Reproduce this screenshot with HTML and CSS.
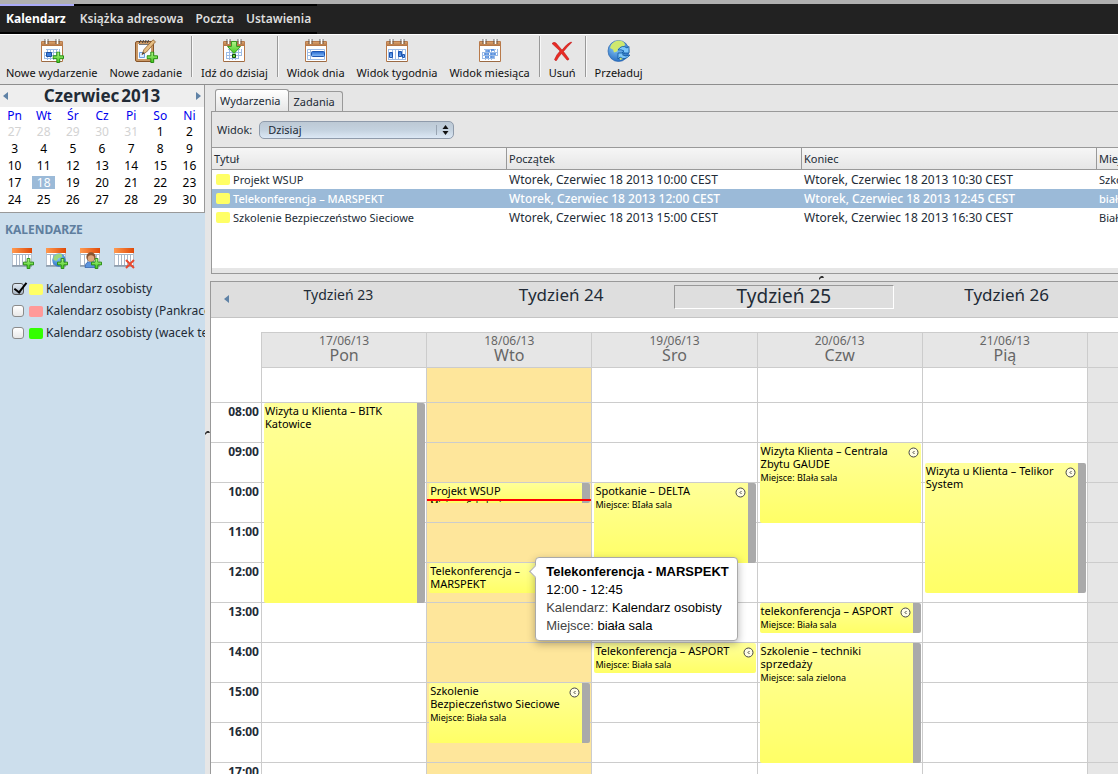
FILE: index.html
```html
<!DOCTYPE html>
<html lang="pl">
<head>
<meta charset="utf-8">
<title>Kalendarz</title>
<link rel="stylesheet" href="styles.css">
</head>
<body>
<svg class="defs" aria-hidden="true">
  <defs>
    <linearGradient id="gGreen" x1="0" y1="0" x2="0" y2="1"><stop offset="0" stop-color="#b6f58c"/><stop offset="1" stop-color="#3fc81c"/></linearGradient>
    <linearGradient id="gBlue" x1="0" y1="0" x2="0" y2="1"><stop offset="0" stop-color="#2467cf"/><stop offset="1" stop-color="#8cc0fa"/></linearGradient>
    <linearGradient id="gTan" x1="0" y1="0" x2="0" y2="1"><stop offset="0" stop-color="#d9a26c"/><stop offset="1" stop-color="#b0703f"/></linearGradient>
    <linearGradient id="gOrange" x1="0" y1="0" x2="1" y2="0"><stop offset="0" stop-color="#ff9a50"/><stop offset="1" stop-color="#e04a08"/></linearGradient>
    <radialGradient id="gGlobe" cx=".4" cy=".3" r=".8"><stop offset="0" stop-color="#8fd0fb"/><stop offset="1" stop-color="#1c62bb"/></radialGradient>
    <symbol id="sheet" viewBox="0 0 24 24">
      <path d="M1.500 2.500h21v20h-21z" fill="#fff" stroke="#b87a4b"/>
      <path d="M2 3h20v4H2z" fill="url(#gTan)"/>
      <path d="M5.500 0v5M8.500 0v5M16.500 0v5M19.500 0v5" transform="translate(-.5)" stroke="#444" stroke-width=".8"/>
      <path d="M6.500 0v5M17.500 0v5" stroke="#fff" stroke-width="1.500"/>
      <path d="M2 22.500h20" stroke="#9b6a44"/>
    </symbol>
    <symbol id="grid" viewBox="0 0 24 24"><path d="M6 10.500h12M4 13.500h16M4 16.500h16M4 19.500h12M7.500 10v11M10.500 10v11M13.500 10v11M16.500 10v10M4.500 13v7M19.500 10v7" stroke="#9dbce6" fill="none"/></symbol>
    <symbol id="plus" viewBox="0 0 12 12"><path d="M4.500.5h3v4h4v3h-4v4h-3v-4h-4v-3h4z" fill="url(#gGreen)" stroke="#23890d"/></symbol>
    <symbol id="miniCal" viewBox="0 0 22 21">
      <path d="M.5.5h19v17H.5z" fill="#fff" stroke="#b9c3cf"/>
      <path d="M0 0h20v5H0z" fill="url(#gOrange)"/>
      <path d="M1 6.500h18M4.500 6v11M7.500 6v11M10.500 6v11M13.500 6v11M16.500 6v11" stroke="#a9b7c8"/>
      <path d="M0 18h20" stroke="#69788a"/>
    </symbol>
    <symbol id="clock" viewBox="0 0 11 11"><circle cx="5.500" cy="5.500" r="4.500" fill="#fffde8" stroke="#444"/><path d="M6.500 4L5 5.500 6.500 7" fill="none" stroke="#333" stroke-width=".9"/></symbol>
  </defs>
</svg>

<header class="masthead">
  <nav class="menu">
    <a class="menu-item is-active" href="#">Kalendarz</a>
    <a class="menu-item" href="#">Książka adresowa</a>
    <a class="menu-item" href="#">Poczta</a>
    <a class="menu-item" href="#">Ustawienia</a>
  </nav>
</header>

<div class="toolbar">
  <div class="tool-group">
    <button class="tool"><svg class="tool-icon" viewBox="0 0 24 24"><use href="#sheet"/><use href="#grid"/><path d="M6.500 13.500h5v4h-5z" fill="#3b7ddd" stroke="#1d4f9f"/><use href="#plus" x="12.500" y="12.500" width="11.500" height="11.500"/></svg>Nowe wydarzenie</button>
    <button class="tool"><svg class="tool-icon" viewBox="0 0 24 24"><rect x="1.500" y="2.500" width="18" height="20" rx="1.500" fill="#c99865" stroke="#875327"/><path d="M4 5h13v15H4z" fill="#f8fbff"/><path d="M5 5.500h11" stroke="#777"/><path d="M6 2.500l1-1.500M8.500 4l1-3M11 4l1-3M13.500 4l1-3M5.500 4v-2" stroke="#444" fill="none"/><path d="M5.500 13.500h5v5h-5z" fill="#dcebff" stroke="#6b9ee0"/><path d="M8 15.500l2-5L19 .8l2.500 2L12.500 13z" fill="#e6bd82" stroke="#8d5e2d" stroke-width=".8"/><path d="M8 15.500l1-2.500 1.500 1.300z" fill="#333"/><use href="#plus" x="12.500" y="12.500" width="11.500" height="11.500"/></svg>Nowe zadanie</button>
  </div>
  <div class="tool-group">
    <button class="tool"><svg class="tool-icon" viewBox="0 0 24 24"><use href="#sheet"/><use href="#grid"/><path d="M10.500 15.500h3v3h-3z" fill="#69d83f" stroke="#174f0c"/><path d="M9.500 2.500h5v5h4l-6.500 7-6.500-7h4z" fill="url(#gGreen)" stroke="#3b9a22"/></svg>Idź do dzisiaj</button>
  </div>
  <div class="tool-group">
    <button class="tool"><svg class="tool-icon" viewBox="0 0 24 24"><use href="#sheet"/><path d="M3.500 10.500h17v10h-17zM6.500 10v11M4 13.500h3M4 16.500h3" fill="none" stroke="#9dbce6"/><rect x="7.500" y="12.500" width="13" height="5" rx="1" fill="url(#gBlue)" stroke="#1e55b0"/></svg>Widok dnia</button>
    <button class="tool"><svg class="tool-icon" viewBox="0 0 24 24"><use href="#sheet"/><path d="M3 10.500h18M3 20.500h18M3.500 10v11M7.500 10v11M10.500 10v11M13.500 10v11M17.500 10v11M20.500 10v11" stroke="#9dbce6"/><path d="M4.500 13.500h3v5h-3zM13.500 12.500h3v5h-3zM17.500 15.500h2v3h-2z" fill="url(#gBlue)" stroke="#1e55b0"/></svg>Widok tygodnia</button>
    <button class="tool"><svg class="tool-icon" viewBox="0 0 24 24"><use href="#sheet"/><use href="#grid"/><path d="M8 12h4M13 11h3M6 15h5M12 15h6M7 18h4M12 18h4" stroke="#4684dc" stroke-width="1.500"/></svg>Widok miesiąca</button>
  </div>
  <div class="tool-group">
    <button class="tool"><svg class="tool-icon" viewBox="0 0 24 24"><path d="M2 4.500Q4 2.500 6 4l6 7Q17 4.500 21 3q1.500 0 0 1.200-4 3.800-7.500 8.300l5.500 7.500q-.5 1.500-2 1l-5.500-6.500q-3.500 4-5 7-1.500.5-2-1 2-5 5.500-8.500z" fill="#e82c24" stroke="#b80f12" stroke-width=".5"/></svg>Usuń</button>
  </div>
  <div class="tool-group">
    <button class="tool"><svg class="tool-icon" viewBox="0 0 24 24"><circle cx="11.500" cy="12" r="10.500" fill="url(#gGlobe)" stroke="#2a64ad" stroke-width=".7"/><path d="M3 9q1-6 8-7.500 6 0 7 4l-2 4-4-1-2 4-3 1-1-3zM12 15l5 1-1 4-3 1z" fill="#cfe86e"/><path d="M11 11q4-6 9-2l2-1.500v6.500h-7l2-2q-3-2-6-1zM23 16q-5 6-10 2l-2 2v-6h6.500l-2 2q3 2 7.500 0z" fill="#7cc6fa" stroke="#0e579f" stroke-width=".8"/></svg>Przeładuj</button>
  </div>
</div>

<div class="workspace">
  <aside class="sidebar">
    <section class="minical">
      <div class="minical-head">
        <button class="arrow" aria-label="Poprzedni miesiąc"><svg class="tri" viewBox="0 0 5 8"><path d="M5 0v8L0 4z"/></svg></button>
        <h2 class="minical-title"><span>Czerwiec</span><span>2013</span></h2>
        <button class="arrow" aria-label="Następny miesiąc"><svg class="tri" viewBox="0 0 5 8"><path d="M0 0v8l5-4z"/></svg></button>
      </div>
      <table class="days">
        <thead><tr><th>Pn</th><th>Wt</th><th>Śr</th><th>Cz</th><th>Pi</th><th>So</th><th>Ni</th></tr></thead>
        <tbody>
          <tr><td class="off">27</td><td class="off">28</td><td class="off">29</td><td class="off">30</td><td class="off">31</td><td>1</td><td>2</td></tr>
          <tr><td>3</td><td>4</td><td>5</td><td>6</td><td>7</td><td>8</td><td>9</td></tr>
          <tr><td>10</td><td>11</td><td>12</td><td>13</td><td>14</td><td>15</td><td>16</td></tr>
          <tr><td>17</td><td><span class="today">18</span></td><td>19</td><td>20</td><td>21</td><td>22</td><td>23</td></tr>
          <tr><td>24</td><td>25</td><td>26</td><td>27</td><td>28</td><td>29</td><td>30</td></tr>
        </tbody>
      </table>
    </section>
    <h3 class="side-title">KALENDARZE</h3>
    <div class="side-tools">
      <button class="side-tool" aria-label="Nowy kalendarz"><svg viewBox="0 0 22 21"><use href="#miniCal"/><use href="#plus" x="11" y="10" width="11" height="11"/></svg></button>
      <button class="side-tool" aria-label="Kalendarz sieciowy"><svg viewBox="0 0 22 21"><use href="#miniCal"/><circle cx="13" cy="12" r="6.800" fill="url(#gGlobe)"/><path d="M7.500 9q3-4 8-3l1 3-4 1-2 3-3-1zM12 14l4-1-1 5-2-1z" fill="#9bd87c"/><use href="#plus" x="11" y="10" width="11" height="11"/></svg></button>
      <button class="side-tool" aria-label="Kalendarz użytkownika"><svg viewBox="0 0 22 21"><use href="#miniCal"/><path d="M5 19.500q0-6 6-6t6 6z" fill="#5b93dc" stroke="#2b5ca8" stroke-width=".7"/><circle cx="11" cy="9" r="4.700" fill="#8a5430"/><circle cx="11" cy="10.500" r="3.200" fill="#dea77c"/><use href="#plus" x="11" y="10" width="11" height="11"/></svg></button>
      <button class="side-tool" aria-label="Usuń kalendarz"><svg viewBox="0 0 22 21"><use href="#miniCal"/><path d="M12 12l8 8M20 12l-8 8" stroke="#e8492e" stroke-width="2"/></svg></button>
    </div>
    <ul class="cal-list">
      <li><label class="cal"><input class="check" type="checkbox" checked><span class="swatch yellow"></span>Kalendarz osobisty</label></li>
      <li><label class="cal"><input class="check" type="checkbox"><span class="swatch pink"></span>Kalendarz osobisty (Pankracek)</label></li>
      <li><label class="cal"><input class="check" type="checkbox"><span class="swatch green"></span>Kalendarz osobisty (wacek test)</label></li>
    </ul>
  </aside>
  <div class="splitter-v"><svg class="grip" viewBox="0 0 5 4"><path d="M0 4V2l2-2h2l1 2H2z"/></svg></div>

  <main class="content">
    <div class="tabs">
      <button class="tab is-current">Wydarzenia</button>
      <button class="tab">Zadania</button>
    </div>
    <section class="list">
      <div class="filter">
        <label for="view">Widok:</label>
        <span class="pick">
          <select id="view" class="pick-select"><option>Dzisiaj</option></select>
          <svg class="pick-arrows" viewBox="0 0 6 10"><path d="M3 0l3 4H0zM3 10l3-4H0z"/></svg>
        </span>
      </div>
      <div class="table-wrap">
      <table class="events">
        <colgroup><col class="c-main"><col class="c-main"><col class="c-main"><col></colgroup>
        <thead><tr><th>Tytuł</th><th>Początek</th><th>Koniec</th><th>Miejsce</th></tr></thead>
        <tbody>
          <tr><td><span class="title"><span class="swatch yellow"></span>Projekt WSUP</span></td><td class="when">Wtorek, Czerwiec 18 2013 10:00 CEST</td><td class="when">Wtorek, Czerwiec 18 2013 10:30 CEST</td><td>Szkoleniowa</td></tr>
          <tr class="is-selected"><td><span class="title"><span class="swatch yellow"></span>Telekonferencja – MARSPEKT</span></td><td class="when">Wtorek, Czerwiec 18 2013 12:00 CEST</td><td class="when">Wtorek, Czerwiec 18 2013 12:45 CEST</td><td>biała sala</td></tr>
          <tr><td><span class="title"><span class="swatch yellow"></span>Szkolenie Bezpieczeństwo Sieciowe</span></td><td class="when">Wtorek, Czerwiec 18 2013 15:00 CEST</td><td class="when">Wtorek, Czerwiec 18 2013 16:30 CEST</td><td>Biała sala</td></tr>
        </tbody>
      </table>
      </div>
    </section>
    <div class="splitter-h"><svg class="grip" viewBox="0 0 5 4"><path d="M0 4V2l2-2h2l1 2H2z"/></svg></div>

    <section class="week">
      <nav class="weeks">
        <button class="arrow" aria-label="Poprzedni tydzień"><svg class="tri" viewBox="0 0 5 8"><path d="M5 0v8L0 4z"/></svg></button>
        <a class="wk small" href="#">Tydzień 23</a>
        <a class="wk" href="#">Tydzień 24</a>
        <a class="wk is-current" href="#">Tydzień 25</a>
        <a class="wk" href="#">Tydzień 26</a>
      </nav>
      <div class="planner">
        <div class="hours">
          <div class="hour first"></div><div class="hour">08:00</div><div class="hour">09:00</div><div class="hour">10:00</div><div class="hour">11:00</div><div class="hour">12:00</div><div class="hour">13:00</div><div class="hour">14:00</div><div class="hour">15:00</div><div class="hour">16:00</div><div class="hour">17:00</div>
        </div>
        <div class="day">
          <div class="day-head"><span class="date">17/06/13</span><span class="name">Pon</span></div>
          <div class="slots">
            <article class="ev busy" style="grid-row: 2 / span 20"><div class="ev-text"><h4>Wizyta u Klienta – BITK Katowice</h4></div></article>
          </div>
        </div>
        <div class="day is-today">
          <div class="day-head"><span class="date">18/06/13</span><span class="name">Wto</span></div>
          <div class="slots">
            <article class="ev busy" style="grid-row: 10 / span 2"><div class="ev-text"><h4>Projekt WSUP</h4><p>Miejsce: Szkoleniowa</p></div></article>
            <article class="ev" style="grid-row: 18 / span 3"><div class="ev-text"><h4>Telekonferencja – MARSPEKT</h4></div><svg class="clock"><use href="#clock"/></svg></article>
            <article class="ev busy" style="grid-row: 30 / span 6"><div class="ev-text"><h4>Szkolenie<br>Bezpieczeństwo Sieciowe</h4><p>Miejsce: Biała sala</p></div><svg class="clock"><use href="#clock"/></svg></article>
            <div class="now"></div>
            <div class="tip" role="tooltip">
              <strong>Telekonferencja - MARSPEKT</strong>
              <span>12:00 - 12:45</span>
              <span><em>Kalendarz:</em> Kalendarz osobisty</span>
              <span><em>Miejsce:</em> biała sala</span>
            </div>
          </div>
        </div>
        <div class="day">
          <div class="day-head"><span class="date">19/06/13</span><span class="name">Śro</span></div>
          <div class="slots">
            <article class="ev busy" style="grid-row: 10 / span 8"><div class="ev-text"><h4>Spotkanie – DELTA</h4><p>Miejsce: BIała sala</p></div><svg class="clock"><use href="#clock"/></svg></article>
            <article class="ev" style="grid-row: 26 / span 3"><div class="ev-text"><h4>Telekonferencja – ASPORT</h4><p>Miejsce: Biała sala</p></div><svg class="clock"><use href="#clock"/></svg></article>
          </div>
        </div>
        <div class="day">
          <div class="day-head"><span class="date">20/06/13</span><span class="name">Czw</span></div>
          <div class="slots">
            <article class="ev" style="grid-row: 6 / span 8"><div class="ev-text"><h4>Wizyta Klienta – Centrala Zbytu GAUDE</h4><p>Miejsce: BIała sala</p></div><svg class="clock"><use href="#clock"/></svg></article>
            <article class="ev busy" style="grid-row: 22 / span 3"><div class="ev-text"><h4>telekonferencja – ASPORT</h4><p>Miejsce: Biała sala</p></div><svg class="clock"><use href="#clock"/></svg></article>
            <article class="ev busy" style="grid-row: 26 / span 12"><div class="ev-text"><h4>Szkolenie – techniki<br>sprzedaży</h4><p>Miejsce: sala zielona</p></div></article>
          </div>
        </div>
        <div class="day">
          <div class="day-head"><span class="date">21/06/13</span><span class="name">Pią</span></div>
          <div class="slots">
            <article class="ev busy" style="grid-row: 8 / span 13"><div class="ev-text"><h4>Wizyta u Klienta – Telikor System</h4></div><svg class="clock"><use href="#clock"/></svg></article>
          </div>
        </div>
        <div class="day is-weekend">
          <div class="day-head"></div>
          <div class="slots"></div>
        </div>
      </div>
    </section>
  </main>
</div>
</body>
</html>
```
FILE: styles.css
```css
* { box-sizing: border-box; }

body {
  margin: 0;
  height: 100vh;
  display: flex;
  flex-direction: column;
  overflow: hidden;
  background: #e6e6e6;
  color: #222b36;
  font: 11px/16px "Noto Sans", "Open Sans", sans-serif;
}

button {
  border: 0;
  padding: 0;
  background: none;
  color: inherit;
  font: inherit;
}

a { color: inherit; text-decoration: none; }
.defs { position: absolute; width: 0; height: 0; }

/* Menu bar */
.masthead {
  flex: none;
  display: flex;
  background: #222;
  border-top: 4px solid #b0b0b0;
}

.menu { display: flex; border-bottom: 2px solid #000; }

.menu-item {
  padding: 4px 6px 5px;
  border-top: 2px solid #000;
  color: #ddd;
  font-size: 12px;
  font-weight: 600;
  line-height: 17px;
}

.menu-item.is-active { padding-right: 8px; color: #fff; font-weight: 700; border-top-color: #aaaaf8; }

/* Toolbar */
.toolbar {
  flex: none;
  display: flex;
  height: 51px;
  padding: 1px 0 7px;
  border-top: 1px solid #fff;
  border-bottom: 1px solid #8e8e8e;
}

.tool-group { display: flex; padding: 0 3px; border-right: 1px solid #999; box-shadow: 1px 0 #f8f8f8; }
.tool-group:first-child { padding-left: 0; }
.tool-group:last-child { border: 0; box-shadow: none; }

.tool {
  display: flex;
  flex-direction: column;
  align-items: center;
  padding: 3px 6px 0;
  gap: 2px;
  color: #111;
  white-space: nowrap;
}

.tool-icon { width: 24px; height: 24px; flex: none; }

/* Frame */
.workspace {
  flex: 1;
  min-height: 0;
  display: grid;
  grid-template-columns: 205px 5px minmax(0, 1fr);
}

.sidebar { overflow: hidden; background: #ccdeec; }

.splitter-v { display: flex; align-items: center; padding-top: 6px; }
.grip { width: 5px; height: 4px; fill: #333; }

.arrow { width: 11px; display: flex; justify-content: center; align-items: center; }
.tri { width: 5px; height: 8px; fill: #5f82a6; }

/* Month view */
.minical {
  border-right: 1px solid #999;
  border-bottom: 1px solid #999;
  background: #fff;
}

.minical-head {
  display: flex;
  justify-content: space-between;
  height: 22px;
  background: #eee;
}

.minical-title {
  display: flex;
  gap: 2px;
  margin: 0;
  font-size: 17px;
  line-height: 22px;
}

.days {
  width: 100%;
  table-layout: fixed;
  border-collapse: collapse;
  margin-bottom: 4px;
  color: #000;
  font-size: 12px;
}

.days th, .days td { height: 17px; padding: 0; text-align: center; line-height: 16px; font-weight: 400; }
.days th { height: 16px; line-height: 15px; color: #00e; }
.days .off { color: #d3d3d3; }
.today { display: block; width: 23px; margin: 0 auto; line-height: 13px; background: #9bbad8; color: #fff; }

/* Calendar list */
.side-title { margin: 9px 5px 10px; color: #5f7f9f; font-size: 12px; line-height: 16px; }
.side-tools { display: flex; gap: 12px; padding-left: 12px; }
.side-tool { width: 22px; height: 21px; }
.side-tool svg { display: block; width: 22px; height: 21px; }

.cal-list { margin: 9px 0 0; padding: 0; list-style: none; font-size: 12px; }
.cal { display: flex; align-items: center; height: 22px; padding-left: 12px; white-space: nowrap; }

.check {
  appearance: none;
  flex: none;
  width: 12px;
  height: 12px;
  margin: 0 5px 0 0;
  border: 1px solid #8b8b8b;
  border-radius: 3px;
  background: linear-gradient(#fff, #e8e8e8);
}

.check:checked { background: linear-gradient(#e0eaf4, #a9b6c3); border-color: #555; }

.check:checked::after {
  content: "";
  display: block;
  width: 5px;
  height: 11px;
  margin: -4px 0 0 4px;
  border: solid #000;
  border-width: 0 2px 2px 0;
  transform: rotate(38deg);
}

.swatch { flex: none; width: 14px; height: 11px; margin-right: 3px; border-radius: 2px; }
.yellow { background: #ff6; }
.pink { background: #f99; }
.green { background: #3f0; }

/* Event list */
.content { display: flex; flex-direction: column; min-width: 0; min-height: 0; }

.tabs { flex: none; display: flex; align-items: flex-end; height: 26px; padding-left: 5px; }

.tab {
  height: 20px;
  padding: 0 7px 0 5px;
  border: 1px solid #999;
  border-left-width: 0;
  border-bottom: 0;
  border-radius: 0 3px 0 0;
  background: #e2e2e2;
}

.tab.is-current {
  height: 22px;
  padding-left: 4px;
  border-left-width: 1px;
  border-radius: 3px 3px 0 0;
  background: linear-gradient(#fff, #e6e6e6);
}

.list {
  flex: none;
  height: 163px;
  margin-left: 1px;
  padding-bottom: 5px;
  display: flex;
  flex-direction: column;
  border: 1px solid #999;
  border-right: 0;
}

.filter { flex: none; display: flex; align-items: center; gap: 7px; height: 35px; padding-left: 5px; }
.pick { display: flex; align-items: center; position: relative; }

.pick-select {
  appearance: none;
  width: 195px;
  height: 18px;
  padding: 0 8px;
  border: 1px solid #8f9bab;
  border-radius: 5px;
  background: linear-gradient(#bdc9d5, #c4d2df 50%, #dce8f5);
  color: inherit;
  font: inherit;
  line-height: 16px;
}

.pick-arrows {
  position: absolute;
  right: 0;
  width: 18px;
  height: 10px;
  fill: #111;
  border-left: 1px solid #98a4b2;
  pointer-events: none;
}

.table-wrap { flex: 1; overflow: hidden; background: #fff; }
.events { width: 100%; table-layout: fixed; border-collapse: separate; border-spacing: 0; }
.c-main { width: 295px; }

.events th, .events td {
  padding: 0 2px;
  overflow: hidden;
  text-align: left;
  white-space: nowrap;
  line-height: 17px;
}

.events th {
  height: 23px;
  border: solid #999;
  border-width: 1px 1px 1px 0;
  background: linear-gradient(#f6f6f6, #e6e6e6);
  font-weight: 400;
}

.events th:last-child { border-right: 0; }
.events td { height: 19px; }
.events .when { font-size: 12px; }
.title { display: flex; align-items: center; padding-left: 2px; }
.is-selected { background: #9bbad8; color: #fff; font-weight: 500; }

.splitter-h { flex: none; display: flex; justify-content: center; align-items: center; height: 7px; padding-left: 314px; }

/* Week view */
.week {
  flex: 1;
  min-height: 0;
  display: flex;
  flex-direction: column;
  overflow: hidden;
  border: 1px solid #999;
  border-width: 1px 0 0 1px;
  background: #fff;
}

.weeks {
  flex: none;
  display: grid;
  grid-template-columns: 16px repeat(4, minmax(0, 1fr));
  height: 36px;
  padding-top: 3px;
  border-bottom: 1px solid #c4c4c4;
  background: #dedede;
}

.weeks .arrow { width: 30px; height: 28px; }

.wk {
  height: 24px;
  margin: 0 1px;
  border: 1px solid transparent;
  text-align: center;
  font-size: 17px;
  line-height: 18px;
}

.wk.small { font-size: 14px; line-height: 17px; }
.wk.is-current { border-color: #999 #fff #fff #999; font-size: 19px; line-height: 21px; }

.planner {
  display: grid;
  grid-template-columns: 50px repeat(5, minmax(0, 1fr)) 31px;
  padding-top: 14px;
}

.hours { padding-top: 36px; }

.hour {
  height: 40px;
  padding: 1px 2px 0 0;
  border-bottom: 1px solid #ccc;
  text-align: right;
  font-size: 12px;
  font-weight: 700;
  line-height: 16px;
}

.hour.first { height: 35px; }

.day { border-left: 1px solid #ccc; }

.day-head {
  display: flex;
  flex-direction: column;
  height: 36px;
  padding-top: 1px;
  border: solid #ccc;
  border-width: 1px 0;
  background: #e6e6e6;
  color: #666;
  text-align: center;
}

.date { font-size: 12px; line-height: 13px; }
.name { font-size: 16px; line-height: 17px; }

.slots {
  position: relative;
  display: grid;
  grid-template-rows: 35px repeat(40, 10px);
  padding: 0 1px 0 2px;
  background: repeating-linear-gradient(transparent 0 34px, #ccc 34px 35px, transparent 35px 40px);
}

.is-today .slots { background-color: #fee69b; }
.is-weekend .slots { background-color: #e6e6e6; }

.ev {
  grid-column: 1;
  display: flex;
  min-height: 0;
  overflow: hidden;
  padding: 1px 0 0 1px;
  border-radius: 2px;
  background: linear-gradient(#ff9, #ff6);
  color: #000;
}

.ev.busy { border-right: 8px solid #aaa; }
.ev-text { flex: 1; min-width: 0; }
.ev h4 { margin: 0; font-size: 11px; font-weight: 400; line-height: 13px; }
.ev p { margin: 0; font-size: 9px; line-height: 15px; white-space: nowrap; }
.clock { flex: none; width: 11px; height: 11px; margin: 3px 2px 0 0; }

/* Current time marker and event details lie over the slots */
.now { position: absolute; top: 131px; left: 0; right: 0; height: 2px; background: #f00; }

.tip {
  position: absolute;
  z-index: 2;
  top: 189px;
  left: 108px;
  display: flex;
  flex-direction: column;
  padding: 5px 8px 5px 10px;
  border: 1px solid #aaa;
  border-radius: 4px;
  background: #fff;
  box-shadow: 0 3px 8px rgba(0, 0, 0, .3);
  color: #000;
  font: 13px/18px "Liberation Sans", Arial, sans-serif;
  white-space: nowrap;
}

.tip em { color: #444; font-style: normal; }

.tip::before {
  content: "";
  position: absolute;
  left: -5px;
  top: 9px;
  width: 8px;
  height: 8px;
  border: solid #aaa;
  border-width: 0 0 1px 1px;
  background: #fff;
  transform: rotate(45deg);
}
```
